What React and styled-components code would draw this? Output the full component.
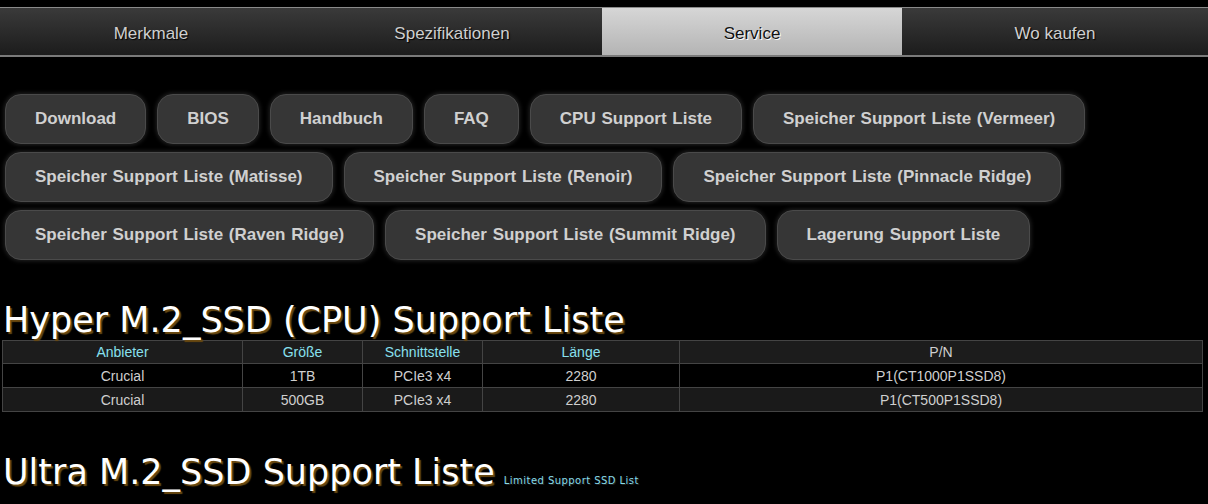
import React from "react";
import styled, { createGlobalStyle } from "styled-components";

const Global = createGlobalStyle`
  html, body { margin: 0; padding: 0; background: #000; }
  body { font-family: "Liberation Sans", Arial, sans-serif; color: #ccc; }
`;

const Page = styled.div`
  width: 1208px;
  padding-top: 7px;
`;

const Nav = styled.nav`
  display: flex;
  border-top: 1px solid #8a8a8a;
  border-bottom: 2px solid #7a7a7a;
  background: linear-gradient(#3a3a3a, #1c1c1c);
  height: 47px;
`;

const Tab = styled.div`
  flex: 0 0 ${(p) => p.$w}px;
  display: flex;
  align-items: center;
  justify-content: center;
  padding-top: 5px;
  box-sizing: border-box;
  font-size: 17px;
  color: ${(p) => (p.$active ? "#111" : "#cfcfcf")};
  background: ${(p) => (p.$active ? "linear-gradient(#d6d6d6, #b4b4b4)" : "transparent")};
  text-shadow: ${(p) => (p.$active ? "1px 1px 0 #fff" : "1px 1px 1px #000")};
`;

const Buttons = styled.div`
  display: flex;
  flex-wrap: wrap;
  gap: 8px 11px;
  padding: 37px 0 0 5px;
`;

const Btn = styled.div`
  box-sizing: border-box;
  height: 50px;
  padding: 0 29px;
  display: flex;
  align-items: center;
  background: #363636;
  border: 1px solid #4a4a4a;
  border-radius: 16px;
  box-shadow: 0 0 4px 1px #222;
  font-weight: bold;
  font-size: 17px;
  word-spacing: 1px;
  color: #d0d0d0;
`;

const Heading = styled.h2`
  margin: ${(p) => p.$mt}px 0 0 3px;
  font-family: "DejaVu Sans", Verdana, sans-serif;
  font-weight: normal;
  font-size: 35px;
  line-height: 40px;
  color: #fff;
  text-shadow: 2px 2px 1px #6b4a10;
  display: flex;
  align-items: baseline;
  gap: 9px;
`;

const Small = styled.span`
  font-size: 10px;
  color: #86dbe8;
  text-shadow: 1px 1px 0 #222;
  letter-spacing: 0.45px;
`;

const Table = styled.table`
  margin-left: 2px;
  width: 1200px;
  border-collapse: collapse;
  font-size: 14px;
  table-layout: fixed;
`;

const Th = styled.th`
  font-weight: normal;
  color: ${(p) => (p.$plain ? "#cfcfcf" : "#88e0ee")};
  background: #1c1c1c;
  border: 1px solid #444;
  height: 22px;
  padding: 0;
  text-align: center;
`;

const Td = styled.td`
  color: #cfcfcf;
  border: 1px solid #444;
  height: 23px;
  padding: 0;
  text-align: center;
  background: ${(p) => (p.$alt ? "#1a1a1a" : "#000")};
`;

const tabs = [
  ["Merkmale", 302],
  ["Spezifikationen", 300],
  ["Service", 300, true],
  ["Wo kaufen", 306],
];

const buttons = [
  "Download",
  "BIOS",
  "Handbuch",
  "FAQ",
  "CPU Support Liste",
  "Speicher Support Liste (Vermeer)",
  "Speicher Support Liste (Matisse)",
  "Speicher Support Liste (Renoir)",
  "Speicher Support Liste (Pinnacle Ridge)",
  "Speicher Support Liste (Raven Ridge)",
  "Speicher Support Liste (Summit Ridge)",
  "Lagerung Support Liste",
];

const cols = [
  ["Anbieter", 240],
  ["Größe", 120],
  ["Schnittstelle", 120],
  ["Länge", 197],
  ["P/N", 523, true],
];

const rows = [
  ["Crucial", "1TB", "PCIe3 x4", "2280", "P1(CT1000P1SSD8)"],
  ["Crucial", "500GB", "PCIe3 x4", "2280", "P1(CT500P1SSD8)"],
];

export default function App() {
  return (
    <Page>
      <Global />
      <Nav>
        {tabs.map(([t, w, a]) => (
          <Tab key={t} $w={w} $active={a}>
            {t}
          </Tab>
        ))}
      </Nav>
      <Buttons>
        {buttons.map((b) => (
          <Btn key={b}>{b}</Btn>
        ))}
      </Buttons>
      <Heading $mt={40}>Hyper M.2_SSD (CPU) Support Liste</Heading>
      <Table>
        <colgroup>
          {cols.map(([c, w]) => (
            <col key={c} style={{ width: w }} />
          ))}
        </colgroup>
        <thead>
          <tr>
            {cols.map(([c, , plain]) => (
              <Th key={c} $plain={plain}>
                {c}
              </Th>
            ))}
          </tr>
        </thead>
        <tbody>
          {rows.map((r, i) => (
            <tr key={i}>
              {r.map((c, j) => (
                <Td key={j} $alt={i % 2 === 1}>
                  {c}
                </Td>
              ))}
            </tr>
          ))}
        </tbody>
      </Table>
      <Heading $mt={40}>
        Ultra M.2_SSD Support Liste <Small>Limited Support SSD List</Small>
      </Heading>
    </Page>
  );
}
